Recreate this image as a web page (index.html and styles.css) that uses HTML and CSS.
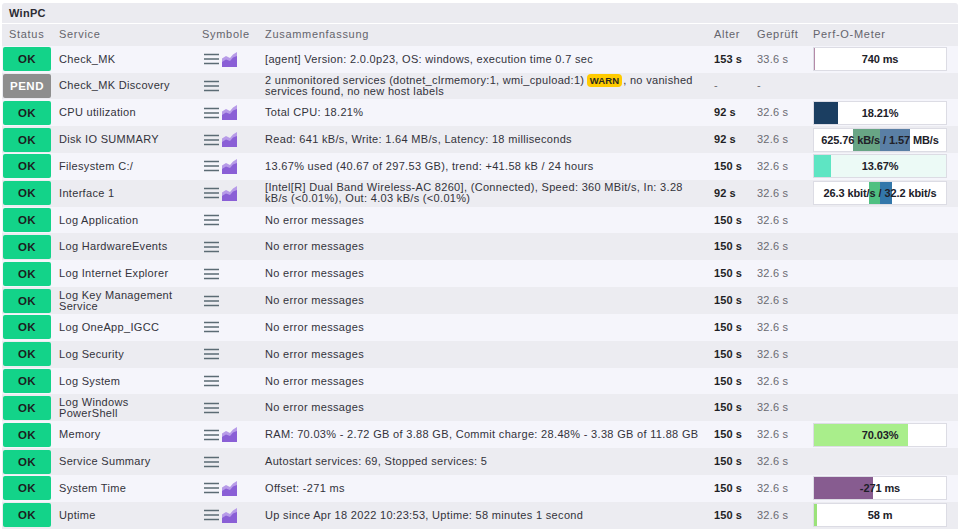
FILE: index.html
```html
<!DOCTYPE html>
<html lang="de">
<head>
<meta charset="utf-8">
<title>WinPC</title>
<link rel="stylesheet" href="styles.css">
</head>
<body>
<svg class="defs" width="0" height="0" aria-hidden="true">
  <symbol id="menu" viewBox="0 0 15 12"><path d="M0 1.5H15M0 6H15M0 10.5H15" stroke="#5b6b74" stroke-width="1.4" fill="none"/></symbol>
  <symbol id="graph" viewBox="0 0 15 15"><path d="M0 15V6.5L4 4 8 6 11 2.5 15 0V15Z" fill="#b79be8"/><path d="M0 15V10L4 7.5 8 9 11 5.5 15 4V15Z" fill="#8a5fd6"/></symbol>
</svg>
<div class="page">
<div class="host">WinPC</div>
<table class="services">
<colgroup><col class="c-state"><col class="c-service"><col class="c-icons"><col class="c-summary"><col class="c-age"><col class="c-checked"><col class="c-perf"></colgroup>
<thead><tr><th>Status</th><th>Service</th><th>Symbole</th><th>Zusammenfassung</th><th>Alter</th><th>Geprüft</th><th>Perf-O-Meter</th></tr></thead>
<tbody>
<tr><td class="state ok"><span>OK</span></td><td>Check_MK</td><td><span class="icons"><svg class="i-menu"><use href="#menu"/></svg><svg class="i-graph"><use href="#graph"/></svg></span></td><td>[agent] Version: 2.0.0p23, OS: windows, execution time 0.7 sec</td><td class="age">153 s</td><td class="checked">33.6 s</td><td class="perf"><div class="meter"><div class="bar" style="width:1px;background:#b48aa8"></div><b>740 ms</b></div></td></tr>
<tr><td class="state pend"><span>PEND</span></td><td>Check_MK Discovery</td><td><span class="icons"><svg class="i-menu"><use href="#menu"/></svg></span></td><td>2 unmonitored services (dotnet_clrmemory:1, wmi_cpuload:1) <em class="warn">WARN</em>, no vanished<br>services found, no new host labels</td><td class="dash">-</td><td class="dash">-</td><td></td></tr>
<tr><td class="state ok"><span>OK</span></td><td>CPU utilization</td><td><span class="icons"><svg class="i-menu"><use href="#menu"/></svg><svg class="i-graph"><use href="#graph"/></svg></span></td><td>Total CPU: 18.21%</td><td class="age">92 s</td><td class="checked">32.6 s</td><td class="perf"><div class="meter"><div class="bar" style="width:24px;background:#1b3e61"></div><b>18.21%</b></div></td></tr>
<tr><td class="state ok"><span>OK</span></td><td>Disk IO SUMMARY</td><td><span class="icons"><svg class="i-menu"><use href="#menu"/></svg><svg class="i-graph"><use href="#graph"/></svg></span></td><td>Read: 641 kB/s, Write: 1.64 MB/s, Latency: 18 milliseconds</td><td class="age">92 s</td><td class="checked">32.6 s</td><td class="perf"><div class="meter"><div class="spacer" style="width:39px"></div><div class="bar" style="width:27px;background:#68a585"></div><div class="bar" style="width:30px;background:#5a7fa5"></div><b>625.76 kB/s / 1.57 MB/s</b></div></td></tr>
<tr><td class="state ok"><span>OK</span></td><td>Filesystem C:/</td><td><span class="icons"><svg class="i-menu"><use href="#menu"/></svg><svg class="i-graph"><use href="#graph"/></svg></span></td><td>13.67% used (40.67 of 297.53 GB), trend: +41.58 kB / 24 hours</td><td class="age">150 s</td><td class="checked">32.6 s</td><td class="perf"><div class="meter tint"><div class="bar" style="width:17px;background:#5ee5c3"></div><b>13.67%</b></div></td></tr>
<tr><td class="state ok"><span>OK</span></td><td>Interface 1</td><td><span class="icons"><svg class="i-menu"><use href="#menu"/></svg><svg class="i-graph"><use href="#graph"/></svg></span></td><td>[Intel[R] Dual Band Wireless-AC 8260], (Connected), Speed: 360 MBit/s, In: 3.28<br>kB/s (&lt;0.01%), Out: 4.03 kB/s (&lt;0.01%)</td><td class="age">92 s</td><td class="checked">32.6 s</td><td class="perf"><div class="meter"><div class="spacer" style="width:55px"></div><div class="bar" style="width:11px;background:#4fc081"></div><div class="bar" style="width:12px;background:#3377aa"></div><b>26.3 kbit/s / 32.2 kbit/s</b></div></td></tr>
<tr><td class="state ok"><span>OK</span></td><td>Log Application</td><td><span class="icons"><svg class="i-menu"><use href="#menu"/></svg></span></td><td>No error messages</td><td class="age">150 s</td><td class="checked">32.6 s</td><td></td></tr>
<tr><td class="state ok"><span>OK</span></td><td>Log HardwareEvents</td><td><span class="icons"><svg class="i-menu"><use href="#menu"/></svg></span></td><td>No error messages</td><td class="age">150 s</td><td class="checked">32.6 s</td><td></td></tr>
<tr><td class="state ok"><span>OK</span></td><td>Log Internet Explorer</td><td><span class="icons"><svg class="i-menu"><use href="#menu"/></svg></span></td><td>No error messages</td><td class="age">150 s</td><td class="checked">32.6 s</td><td></td></tr>
<tr><td class="state ok"><span>OK</span></td><td>Log Key Management<br>Service</td><td><span class="icons"><svg class="i-menu"><use href="#menu"/></svg></span></td><td>No error messages</td><td class="age">150 s</td><td class="checked">32.6 s</td><td></td></tr>
<tr><td class="state ok"><span>OK</span></td><td>Log OneApp_IGCC</td><td><span class="icons"><svg class="i-menu"><use href="#menu"/></svg></span></td><td>No error messages</td><td class="age">150 s</td><td class="checked">32.6 s</td><td></td></tr>
<tr><td class="state ok"><span>OK</span></td><td>Log Security</td><td><span class="icons"><svg class="i-menu"><use href="#menu"/></svg></span></td><td>No error messages</td><td class="age">150 s</td><td class="checked">32.6 s</td><td></td></tr>
<tr><td class="state ok"><span>OK</span></td><td>Log System</td><td><span class="icons"><svg class="i-menu"><use href="#menu"/></svg></span></td><td>No error messages</td><td class="age">150 s</td><td class="checked">32.6 s</td><td></td></tr>
<tr><td class="state ok"><span>OK</span></td><td>Log Windows<br>PowerShell</td><td><span class="icons"><svg class="i-menu"><use href="#menu"/></svg></span></td><td>No error messages</td><td class="age">150 s</td><td class="checked">32.6 s</td><td></td></tr>
<tr><td class="state ok"><span>OK</span></td><td>Memory</td><td><span class="icons"><svg class="i-menu"><use href="#menu"/></svg><svg class="i-graph"><use href="#graph"/></svg></span></td><td>RAM: 70.03% - 2.72 GB of 3.88 GB, Commit charge: 28.48% - 3.38 GB of 11.88 GB</td><td class="age">150 s</td><td class="checked">32.6 s</td><td class="perf"><div class="meter"><div class="bar" style="width:94px;background:#a9ee8b"></div><b>70.03%</b></div></td></tr>
<tr><td class="state ok"><span>OK</span></td><td>Service Summary</td><td><span class="icons"><svg class="i-menu"><use href="#menu"/></svg></span></td><td>Autostart services: 69, Stopped services: 5</td><td class="age">150 s</td><td class="checked">32.6 s</td><td></td></tr>
<tr><td class="state ok"><span>OK</span></td><td>System Time</td><td><span class="icons"><svg class="i-menu"><use href="#menu"/></svg><svg class="i-graph"><use href="#graph"/></svg></span></td><td>Offset: -271 ms</td><td class="age">150 s</td><td class="checked">32.6 s</td><td class="perf"><div class="meter"><div class="bar" style="width:59px;background:#875c90"></div><b>-271 ms</b></div></td></tr>
<tr><td class="state ok"><span>OK</span></td><td>Uptime</td><td><span class="icons"><svg class="i-menu"><use href="#menu"/></svg><svg class="i-graph"><use href="#graph"/></svg></span></td><td>Up since Apr 18 2022 10:23:53, Uptime: 58 minutes 1 second</td><td class="age">150 s</td><td class="checked">32.6 s</td><td class="perf"><div class="meter"><div class="bar" style="width:3px;background:#9be27a"></div><b>58 m</b></div></td></tr>
</tbody>
</table>
</div>
</body>
</html>
```
FILE: styles.css
```css
* { box-sizing: border-box; }
html, body { margin: 0; background: #fff; }
body { font-family: "Liberation Sans", Arial, sans-serif; font-size: 11px; line-height: 11px; letter-spacing: .32px; color: #33333b; overflow: hidden; }
.defs { position: absolute; }
.page { padding: 3px 2px 0 2px; }
.host { height: 20px; padding: 0 7px; line-height: 20px; background: #ebebf0; border-radius: 3px 3px 0 0; font-weight: bold; letter-spacing: .3px; color: #2c2c33; }
.services { width: 956px; border-collapse: collapse; table-layout: fixed; margin-top: 1px; }
.c-state { width: 50px; }
.c-service { width: 150px; }
.c-icons { width: 63px; }
.c-summary { width: 449px; }
.c-age { width: 43px; }
.c-checked { width: 56px; }
th { height: 21.7px; padding: 0 0 0 7px; text-align: left; font-weight: normal; background: #ebebf0; color: #64646c; letter-spacing: .7px; }
td { height: 26.83px; padding: 0 7px; vertical-align: middle; overflow: visible; white-space: nowrap; }
th:nth-child(3), td:nth-child(3), th:nth-child(4), td:nth-child(4), th:nth-child(5), td:nth-child(5), th:nth-child(6), td:nth-child(6), th:nth-child(7), td:nth-child(7) { padding-left: 0; padding-right: 0; }
tbody tr:nth-child(odd) { background: #f5f5fb; }
tbody tr:nth-child(even) { background: #ececf1; }
td.state { padding: 0; }
td.state span { display: block; width: 48px; height: 24px; margin-left: 1px; line-height: 24px; text-align: center; font-weight: bold; border-radius: 2px; letter-spacing: .5px; font-size: 11.5px; }
.ok span { background: #13d389; color: #1c1c20; }
.pend span { background: #8e8e8e; color: #fff; }
.icons { display: flex; gap: 3px; align-items: center; padding-left: 2px; }
.i-menu { width: 15px; height: 12px; }
.i-graph { width: 15px; height: 15px; }
.warn { font-style: normal; font-weight: bold; font-size: 9.5px; background: #ffcb00; color: #2a2a20; padding: 1px 3px; margin: 0 1px 0 -1px; border-radius: 4px; letter-spacing: .1px; }
.age { font-weight: bold; color: #1f1f25; letter-spacing: .1px; }
.checked { color: #6a6a72; letter-spacing: .2px; }
.dash { color: #6a6a72; }
.perf { padding-right: 0; }
.meter { position: relative; display: flex; width: 134px; height: 24px; background: #fff; border: 1px solid #dcdce4; }
.meter.tint { background: #ecfaf6; }
.bar { height: 100%; }
.meter b { position: absolute; left: 0; right: 0; top: 0; line-height: 22px; text-align: center; color: #202028; letter-spacing: -.1px; }
```
